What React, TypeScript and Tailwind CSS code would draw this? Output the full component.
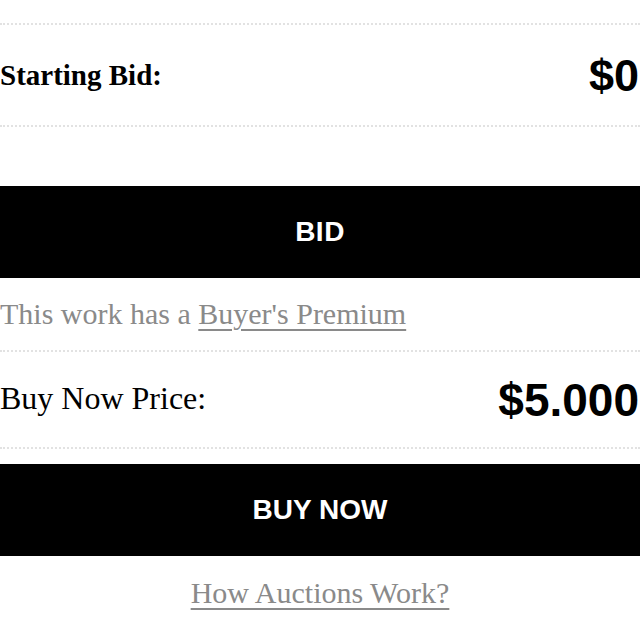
import React from "react";

export default function App() {
  return (
    <div className="w-[640px] h-[620px] bg-white overflow-hidden flex flex-col">
      <div className="shrink-0 mt-[23px] h-[104px] border-y-2 border-dotted border-[#e2e2e2] flex items-center justify-between">
        <span className="font-['Liberation_Serif','Times_New_Roman',serif] text-[29px] font-bold text-black leading-none">
          Starting Bid:
        </span>
        <span className="font-['Liberation_Sans',Arial,sans-serif] text-[45px] font-bold text-black leading-none mr-[1px]">
          $0
        </span>
      </div>
      <button className="shrink-0 font-['Liberation_Sans',Arial,sans-serif] mt-[59px] h-[92px] w-full bg-black text-white text-[28px] font-bold tracking-[0.5px] flex items-center justify-center">
        BID
      </button>
      <div className="shrink-0 h-[74px] border-b-2 border-dotted border-[#e2e2e2] flex items-center">
        <span className="font-['Liberation_Serif','Times_New_Roman',serif] text-[30px] text-[#8a8a8a] leading-none">
          This work has a{" "}
          <a className="underline decoration-2 underline-offset-[5px] decoration-[#8a8a8a]">
            Buyer's Premium
          </a>
        </span>
      </div>
      <div className="shrink-0 h-[97px] border-b-2 border-dotted border-[#e2e2e2] flex items-center justify-between">
        <span className="font-['Liberation_Serif','Times_New_Roman',serif] text-[32px] text-black leading-none mt-[-3px]">
          Buy Now Price:
        </span>
        <span className="font-['Liberation_Sans',Arial,sans-serif] text-[46px] font-bold text-black leading-none mr-[1px]">
          $5.000
        </span>
      </div>
      <button className="shrink-0 font-['Liberation_Sans',Arial,sans-serif] mt-[15px] h-[92px] w-full bg-black text-white text-[28px] font-bold flex items-center justify-center">
        BUY NOW
      </button>
      <div className="shrink-0 h-[74px] flex items-center justify-center">
        <a className="font-['Liberation_Serif','Times_New_Roman',serif] text-[30px] text-[#8a8a8a] leading-none underline decoration-2 underline-offset-[5px] decoration-[#8a8a8a]">
          How Auctions Work?
        </a>
      </div>
    </div>
  );
}
